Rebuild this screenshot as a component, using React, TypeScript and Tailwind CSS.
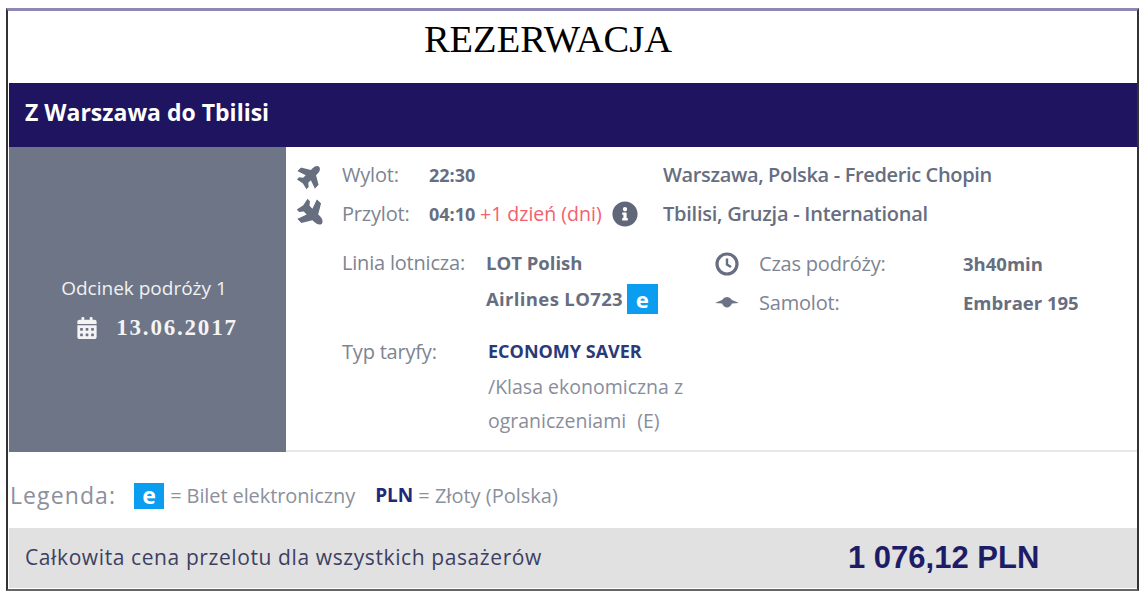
import React from "react";
import { FaInfoCircle, FaCalendarAlt } from "react-icons/fa";

const EBadge = ({ className }: { className: string }) => (
  <span className={`inline-flex items-center justify-center bg-[#0a9df0] text-white font-bold font-['Noto_Sans',sans-serif] ${className}`}>e</span>
);

// stubby top-down plane, drawn nose up and turned with a rotate class
const PlaneIcon = ({ className }: { className: string }) => (
  <svg viewBox="0 0 24 24" fill="#666e80" className={className}>
    <path d="M12 0 Q15.5 1 15.5 6 V8 L24 13 V18 L15.5 15 V18.5 L18.5 21 V24 L12 22.5 L5.5 24 V21 L8.5 18.5 V15 L0 18 V13 L8.5 8 V6 Q8.5 1 12 0 Z" />
  </svg>
);

const ClockIcon = () => (
  <svg width="24" height="24" viewBox="0 0 24 24" fill="none" stroke="#666e80" className="shrink-0">
    <circle cx="12" cy="12" r="10" strokeWidth="3.2" />
    <path d="M12 6.5 V12.5 L16 15" strokeWidth="2.4" />
  </svg>
);

// front view of a small plane
const PlaneFront = () => (
  <svg width="24" height="12" viewBox="0 0 24 12" fill="#6b7385" className="shrink-0">
    <path d="M0 7 L7 4 Q9 1 12 1 Q15 1 17 4 L24 7 L17 7.5 Q15 11.5 12 11.5 Q9 11.5 7 7.5 Z" />
  </svg>
);

export default function App() {
  return (
    <div className="h-[598px] w-[1147px] overflow-hidden bg-white pl-[6px] pt-[8px] font-['Open_Sans',sans-serif]">
      <div className="h-[583px] w-[1133px] border-t-[3px] border-r-2 border-b-2 border-l-[2px] border-t-[#8f88b5] border-r-[#333] border-b-[#666] border-l-[#333] pl-[1px]">
        <div className="flex h-[72px] items-center justify-center pb-[14px] pr-[50px] font-['Liberation_Serif',serif] text-[38.5px] text-black">REZERWACJA</div>

        <div className="flex h-[64px] items-center bg-[#1e1460] pb-[5px] pl-[16px] text-[23px] font-bold text-white">Z Warszawa do Tbilisi</div>

        <div className="flex h-[305px]">
          <div className="flex w-[277px] shrink-0 flex-col items-center justify-center bg-[#6d7587] pt-[20px] text-white">
            <div className="pr-[7px] text-[19px] text-[#f2f2f2]">Odcinek podróży 1</div>
            <div className="mt-[9px] flex items-center pl-[19px]">
              <FaCalendarAlt className="mr-[18px] text-[22px] text-[#f4f4f4]" />
              <span className="font-['Liberation_Serif',serif] text-[23px] font-bold tracking-[1.8px] text-[#f4f4f4]">13.06.2017</span>
            </div>
          </div>

          <div className="flex-1 border-b-2 border-[#e8e8e8] pl-[12px] pt-[9px] text-[20px] tracking-[-0.2px] text-[#7d8492]">
            <div className="flex h-[38px] items-center">
              <PlaneIcon className="h-[25px] w-[25px] shrink-0 rotate-45" />
              <span className="ml-[19px] w-[87px]">Wylot:</span>
              <span className="w-[234px] text-[18px] font-bold tracking-normal text-[#666e80]">22:30</span>
              <span className="text-[20px] font-semibold tracking-[-0.35px] text-[#666e80]">Warszawa, Polska - Frederic Chopin</span>
            </div>
            <div className="flex h-[40px] items-center">
              <PlaneIcon className="h-[28px] w-[28px] shrink-0 rotate-[135deg]" />
              <span className="ml-[16px] w-[87px]">Przylot:</span>
              <span className="w-[51px] text-[18px] font-bold tracking-normal text-[#666e80]">04:10</span>
              <span className="w-[132px] whitespace-nowrap text-[19.5px] tracking-normal text-[#f4606c]">+1 dzień (dni)</span>
              <FaInfoCircle className="w-[26px] shrink-0 text-[26px] text-[#5f6779]" />
              <span className="ml-[25px] text-[20px] font-semibold tracking-[-0.25px] text-[#666e80]">Tbilisi, Gruzja - International</span>
            </div>

            <div className="mt-[11px] flex">
              <div className="ml-[44px] w-[144px] leading-[36px]">Linia lotnicza:</div>
              <div className="w-[229px] text-[18.5px] font-bold leading-[36px] tracking-normal text-[#666e80]">
                <div>LOT Polish</div>
                <div className="flex items-center tracking-[0.35px]">Airlines LO723<EBadge className="ml-[4px] h-[30px] w-[31px] text-[22px]" /></div>
              </div>
              <div className="w-[44px] pt-[7px]">
                <ClockIcon />
                <div className="mt-[20px]"><PlaneFront /></div>
              </div>
              <div className="-mt-[1px] w-[204px] leading-[39px]">
                <div>Czas podróży:</div>
                <div>Samolot:</div>
              </div>
              <div className="-mt-[1px] text-[18.5px] font-bold leading-[39px] tracking-normal text-[#666e80]">
                <div>3h40min</div>
                <div>Embraer 195</div>
              </div>
            </div>

            <div className="mt-[15px] flex">
              <div className="ml-[44px] w-[146px]">Typ taryfy:</div>
              <div className="-mt-[3px] leading-[35px] tracking-normal">
                <div className="text-[18px] font-bold text-[#2a3a78]">ECONOMY SAVER</div>
                <div className="text-[19.5px] text-[#888e9b]">/Klasa ekonomiczna z</div>
                <div className="-mt-[1px] text-[19.5px] text-[#888e9b]">ograniczeniami <span className="ml-[6px]">(E)</span></div>
              </div>
            </div>
          </div>
        </div>

        <div className="flex h-[76px] items-center pl-[1px] pt-[11px] text-[#8b909c]">
          <span className="text-[23px] tracking-[1.1px]">Legenda:</span>
          <EBadge className="ml-[18px] h-[26px] w-[30px] text-[23px]" />
          <span className="ml-[6px] text-[20px] tracking-[-0.1px]">= Bilet elektroniczny</span>
          <span className="ml-[20px] text-[19px] font-bold text-[#1e2a78]">PLN</span>
          <span className="ml-[5px] text-[20px]">= Złoty (Polska)</span>
        </div>

        <div className="flex h-[60px] items-center bg-[#e1e1e1] pl-[16px]">
          <span className="w-[823px] text-[21px] tracking-[0.6px] text-[#3d3f62]">Całkowita cena przelotu dla wszystkich pasażerów</span>
          <span className="font-['Liberation_Sans',sans-serif] text-[31px] font-bold text-[#1e1c66]">1 076,12 PLN</span>
        </div>
      </div>
    </div>
  );
}
